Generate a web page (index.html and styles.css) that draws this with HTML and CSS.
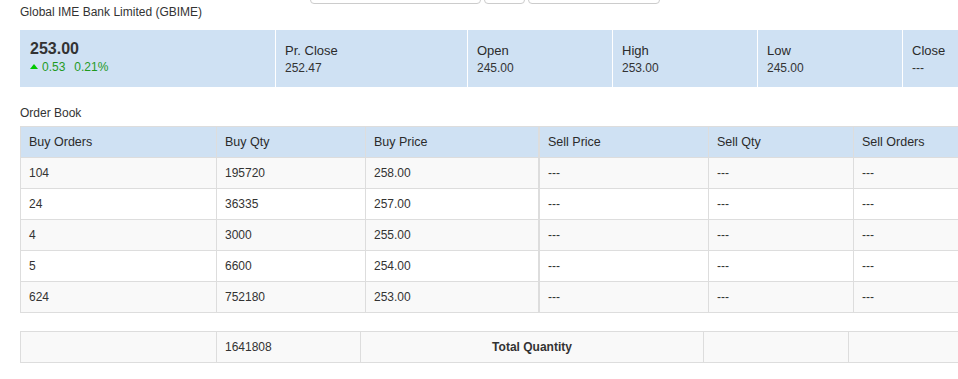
FILE: index.html
```html
<!DOCTYPE html>
<html lang="en">
<head>
<meta charset="utf-8">
<title>GBIME - Order Book</title>
<link rel="stylesheet" href="styles.css">
</head>
<body>
<div class="page">
  <div class="toolbar">
    <div class="ctl ctl-select"></div>
    <div class="ctl ctl-btn"></div>
    <div class="ctl ctl-input"></div>
  </div>

  <h1 class="company">Global IME Bank Limited (GBIME)</h1>

  <div class="stats">
    <div class="stat stat-main">
      <div class="price">253.00</div>
      <div class="change"><span class="tri"></span><span>0.53</span><span class="pct">0.21%</span></div>
    </div>
    <div class="stat stat-w192">
      <div class="label">Pr. Close</div>
      <div class="value">252.47</div>
    </div>
    <div class="stat stat-w145">
      <div class="label">Open</div>
      <div class="value">245.00</div>
    </div>
    <div class="stat stat-w145">
      <div class="label">High</div>
      <div class="value">253.00</div>
    </div>
    <div class="stat stat-w145">
      <div class="label">Low</div>
      <div class="value">245.00</div>
    </div>
    <div class="stat stat-last">
      <div class="label">Close</div>
      <div class="value">---</div>
    </div>
  </div>

  <h2 class="section">Order Book</h2>

  <div class="book">
    <table class="ob ob-buy">
      <thead>
        <tr><th class="c196">Buy Orders</th><th class="c149">Buy Qty</th><th class="c173">Buy Price</th></tr>
      </thead>
      <tbody>
        <tr><td>104</td><td>195720</td><td>258.00</td></tr>
        <tr><td>24</td><td>36335</td><td>257.00</td></tr>
        <tr><td>4</td><td>3000</td><td>255.00</td></tr>
        <tr><td>5</td><td>6600</td><td>254.00</td></tr>
        <tr><td>624</td><td>752180</td><td>253.00</td></tr>
      </tbody>
    </table>
    <table class="ob ob-sell">
      <thead>
        <tr><th class="c169">Sell Price</th><th class="c145">Sell Qty</th><th class="c104 edge">Sell Orders</th></tr>
      </thead>
      <tbody>
        <tr><td>---</td><td>---</td><td class="edge">---</td></tr>
        <tr><td>---</td><td>---</td><td class="edge">---</td></tr>
        <tr><td>---</td><td>---</td><td class="edge">---</td></tr>
        <tr><td>---</td><td>---</td><td class="edge">---</td></tr>
        <tr><td>---</td><td>---</td><td class="edge">---</td></tr>
      </tbody>
    </table>
  </div>

  <table class="ob total">
    <tbody>
      <tr>
        <td class="c196"></td>
        <td class="c144">1641808</td>
        <th class="c343 total-label">Total Quantity</th>
        <td class="c145"></td>
        <td class="c109 edge"></td>
      </tr>
    </tbody>
  </table>
</div>
</body>
</html>
```

FILE: styles.css
```css
html, body {
  margin: 0;
  padding: 0;
  overflow: hidden;
  background: #fff;
}

body {
  font-family: "Liberation Sans", Arial, sans-serif;
  color: #333;
  font-size: 12px;
}

.page {
  padding-left: 20px;
}

/* controls above (partially scrolled out of view) */
.toolbar {
  display: flex;
  gap: 3px;
  margin: -27px 0 0 290px;
}

.ctl {
  height: 31px;
  box-sizing: border-box;
  border: 1px solid #ccc;
  border-radius: 4px;
  background: #fff;
}

.ctl-select { width: 171px; }
.ctl-btn { width: 41px; }
.ctl-input { width: 132px; }

.company {
  margin: 0;
  font-size: 12px;
  font-weight: normal;
  line-height: 17px;
}

/* stats strip */
.stats {
  display: flex;
  margin-top: 9px;
  height: 57px;
  background: #cfe1f3;
}

.stat {
  box-sizing: border-box;
  border-right: 1px solid #fff;
  padding: 12px 9px 0;
  flex: none;
}

.stat-main {
  width: 256px;
  padding: 9px 10px 0;
}

.stat-w192 { width: 192px; }
.stat-w145 { width: 145px; }
.stat-last { flex: 1; border-right: none; }

.price {
  font-size: 16px;
  font-weight: bold;
  line-height: 20px;
  color: #333;
}

.change {
  font-size: 12px;
  line-height: 17px;
  color: #1f9a1f;
}

.tri {
  display: inline-block;
  width: 0;
  height: 0;
  border-left: 4px solid transparent;
  border-right: 4px solid transparent;
  border-bottom: 5px solid #00c800;
  vertical-align: 2px;
  margin-right: 4px;
}

.pct {
  margin-left: 9px;
}

.label {
  font-size: 13px;
  line-height: 18px;
  color: #2b2b2b;
}

.value {
  font-size: 12px;
  line-height: 17px;
}

.section {
  margin: 18px 0 4px;
  font-size: 12px;
  font-weight: normal;
  line-height: 17px;
}

/* order book tables */
.book {
  display: flex;
  align-items: flex-start;
}

.ob {
  border-collapse: separate;
  border-spacing: 0;
  table-layout: fixed;
  border-left: 1px solid #ddd;
  border-top: 1px solid #ddd;
  font-size: 12px;
  flex: none;
}

.ob-buy { width: 519px; }
.ob-sell { width: 419px; }

.ob th,
.ob td {
  box-sizing: border-box;
  padding: 7px 8px;
  line-height: 16px;
  height: 31px;
  border-right: 1px solid #ddd;
  border-bottom: 1px solid #ddd;
  text-align: left;
  white-space: nowrap;
  overflow: hidden;
}

.ob .edge {
  border-right: none;
}

.ob thead th {
  background: #cfe1f3;
  font-weight: normal;
  font-size: 12.5px;
  color: #2b2b2b;
}

.ob tbody tr:nth-child(odd) td {
  background: #f9f9f9;
}

.c196 { width: 196px; }
.c149 { width: 149px; }
.c173 { width: 173px; }
.c169 { width: 169px; }
.c145 { width: 145px; }
.c144 { width: 144px; }
.c343 { width: 343px; }
.c104 { width: 104px; }
.c109 { width: 109px; }

.total {
  margin-top: 18px;
  width: 938px;
}

.total td,
.total th {
  background: #f9f9f9;
}

.total .total-label {
  text-align: center;
  font-weight: bold;
  font-size: 12px;
}
```
